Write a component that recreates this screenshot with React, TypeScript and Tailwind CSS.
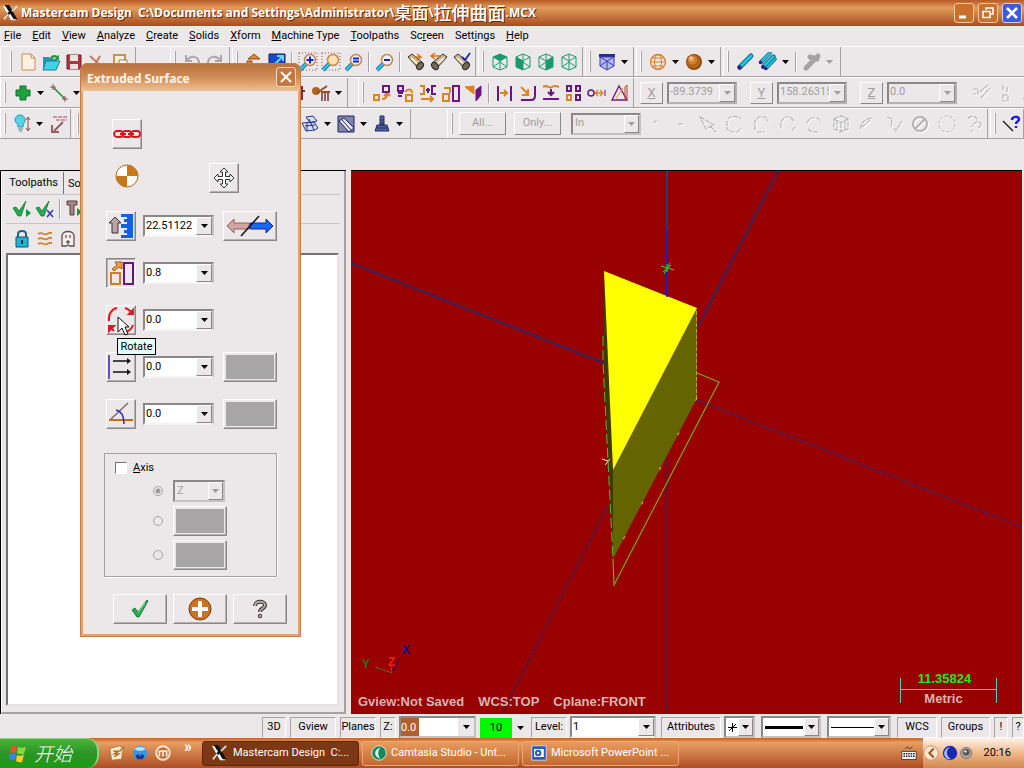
import React from "react";
import clsx from "clsx";

type Box = { children?: React.ReactNode; className?: string };

const menus: [string, string, string][] = [
  ["", "F", "ile"],
  ["", "E", "dit"],
  ["", "V", "iew"],
  ["", "A", "nalyze"],
  ["", "C", "reate"],
  ["", "S", "olids"],
  ["", "X", "form"],
  ["", "M", "achine Type"],
  ["", "T", "oolpaths"],
  ["Sc", "r", "een"],
  ["Sett", "i", "ngs"],
  ["", "H", "elp"],
];

/* ---------- small building blocks ---------- */

function Icon({ children, className }: Box) {
  return (
    <svg viewBox="0 0 20 20" className={clsx("shrink-0", className || "h-5 w-5")} fill="none" aria-hidden="true">
      {children}
    </svg>
  );
}

function Tool({ label, children }: { label: string; children: React.ReactNode }) {
  return (
    <button aria-label={label} className="flex w-[23px] shrink-0 items-center justify-center">
      {children}
    </button>
  );
}

function Arrow({ dim }: { dim?: boolean }) {
  return (
    <svg viewBox="0 0 7 4" className="h-1 w-[7px] shrink-0" aria-hidden="true">
      <path d="M0 0h7L3.5 4z" fill={dim ? "#a09d9e" : "#000"} />
    </svg>
  );
}

function Drop({ dim }: { dim?: boolean }) {
  return (
    <button aria-label="More" className="flex w-[13px] shrink-0 items-center justify-center">
      <Arrow dim={dim} />
    </button>
  );
}

function Sep() {
  return <span className="mx-[3px] h-5 w-0.5 shrink-0 self-center border-r border-l border-r-white border-l-[#a5a2a3]" />;
}

function Band({ children, className }: Box) {
  return (
    <div className={clsx("flex h-full items-stretch border-r border-l border-r-[#a5a2a3] border-l-white", className)}>
      <span className="my-1 mr-1 ml-[3px] w-0.5 shrink-0 border-r border-l border-r-[#a5a2a3] border-l-white" />
      {children}
    </div>
  );
}

function Combo({ label, value, dim, className }: { label: string; value: string; dim?: boolean; className?: string }) {
  return (
    <span className={clsx("flex h-[22px] shrink-0 border-2 border-t-[#8b8788] border-l-[#8b8788]", dim ? "border-r-[#b5b1b3] border-b-[#b5b1b3] bg-[#ece8ea]" : "border-r-[#c5c1c3] border-b-[#f5f3f4] bg-white", className)}>
      <input aria-label={label} defaultValue={value} className={clsx("min-w-0 flex-1 pl-px outline-none", dim && "text-[#a09d9e]")} />
      <button aria-label={label + " list"} className="flex w-4 items-center justify-center border border-t-white border-r-[#8b8788] border-b-[#8b8788] border-l-white bg-[#ece8ea]">
        <Arrow dim={dim} />
      </button>
    </span>
  );
}

function Pick({ label, value, dim, className, children }: { label: string; value: string; dim?: boolean; className?: string; children?: React.ReactNode }) {
  return (
    <span className={clsx("relative flex h-[22px] shrink-0 items-center border-2 border-t-[#8b8788] border-r-[#c5c1c3] border-b-[#c5c1c3] border-l-[#8b8788]", dim ? "bg-[#ece8ea]" : "bg-white", className)}>
      <select aria-label={label} disabled={dim} className={clsx("h-full w-full appearance-none pl-0.5 outline-none", dim && "text-[#a09d9e]")}>
        <option>{value}</option>
      </select>
      {children}
      <span className="pointer-events-none absolute inset-y-0 right-0 flex w-[15px] items-center justify-center border border-t-white border-r-[#8b8788] border-b-[#8b8788] border-l-white bg-[#ece8ea]">
        <Arrow dim={dim} />
      </span>
    </span>
  );
}

function Raised({ label, children, className }: { label: string; children?: React.ReactNode; className?: string }) {
  return (
    <button
      aria-label={label}
      className={clsx("flex h-[30px] shrink-0 items-center justify-center border", className || "w-[54px]", label !== "Scale" && "border-t-white border-r-[#8b8788] border-b-[#8b8788] border-l-white shadow-[inset_-1px_-1px_0_#b5b1b3]")}
    >
      {children}
    </button>
  );
}

function Swatch({ label }: { label: string }) {
  return (
    <Raised label={label} className="w-[54px] p-0.5">
      <span className="h-full w-full bg-[#a8a5a6]" />
    </Raised>
  );
}

/* ---------- icons ---------- */

const Logo = () => (
  <Icon className="h-[18px] w-[18px]">
    <path d="M1 2l6 1 9 15-6 0z" fill="#fff" />
    <path d="M3 1l5 0 9 16h-4z" fill="#111" />
    <path d="M18 1l-8 8-1 2-8 7 5-8z" fill="#111" />
    <path d="M17 2l-6 6M7 11l-5 6" stroke="#dcdcdc" strokeWidth="2" />
  </Icon>
);

const Magnifier = ({ kind }: { kind: string }) => (
  <Icon>
    {(kind === "plus" || kind === "box") && <path d="M1 1h18v17H1z" stroke="#9b4a44" strokeDasharray="1 2" />}
    <path d="M8 12l-6 6" stroke="#2277aa" strokeWidth="4" />
    <path d="M8 12l-6 6" stroke="#35c8ee" strokeWidth="2" />
    <circle cx="12" cy="8" r="5.5" fill={kind === "box" ? "#fbe3b8" : "#f3f0ff"} stroke="#c08a48" strokeWidth="1.5" />
    {kind === "plus" && <path d="M12 4.500v7M8.500 8h7" stroke="#1620d0" strokeWidth="2" />}
    {kind === "half" && <path d="M9 6.500h6M9 9.500h6" stroke="#1620d0" strokeWidth="2" />}
    {kind === "minus" && <path d="M9 8h6" stroke="#1620d0" strokeWidth="2" />}
  </Icon>
);

const Can = ({ kind }: { kind: number }) => (
  <Icon>
    <g transform={kind === 1 ? "matrix(-1 0 0 1 20 0)" : undefined}>
      <path d="M2 5l4-3 11 9-4 6z" fill="#c9b892" stroke="#3b3028" />
      <path d="M5 6l9 8" stroke="#f5ecd8" strokeWidth="2" />
      <ellipse cx="14" cy="14" rx="3" ry="4" transform="rotate(40 14 14)" fill="#74695c" stroke="#2b241e" />
    </g>
    {kind === 0 && <path d="M8 5h6M11 2l4 3-4 3" stroke="#d2761e" strokeWidth="1.500" />}
    {kind === 1 && <path d="M11 4H3M6 1L2 4l4 3" stroke="#d2761e" strokeWidth="1.500" />}
    {kind === 2 && <path d="M10 5l3 3 5-7" stroke="#1c24c8" strokeWidth="1.800" />}
  </Icon>
);

const Cube = ({ face, color = "#1a9a6c" }: { face?: string; color?: string }) => (
  <Icon>
    {face === "top" && <path d="M3 5l7-3 7 3-7 4z" fill={color} />}
    {face === "left" && <path d="M3 5l7 4v9l-7-3z" fill={color} />}
    {face === "right" && <path d="M17 5l-7 4v9l7-3z" fill={color} />}
    <path d="M3 5l7-3 7 3v10l-7 3-7-3zM3 5l7 4 7-4M10 9v9M10 2v7M3 15l7-5 7 5" stroke={color} />
  </Icon>
);

const Globe = () => (
  <Icon>
    <circle cx="10" cy="10" r="7.500" stroke="#d5802e" strokeWidth="1.300" />
    <ellipse cx="10" cy="10" rx="3.500" ry="7.500" stroke="#d5802e" />
    <path d="M2 10h16M4 6h12M4 14h12" stroke="#d5802e" />
  </Icon>
);

const Ball = () => (
  <Icon>
    <circle cx="10" cy="10" r="8" fill="#8e4a10" />
    <circle cx="9.500" cy="9.500" r="6.800" fill="#b4641a" />
    <circle cx="8.500" cy="8" r="4.500" fill="#cb8034" />
    <circle cx="7.500" cy="7" r="2.800" fill="#e0a05a" />
    <circle cx="7" cy="6" r="1.300" fill="#f8dcb4" />
  </Icon>
);

const Rod = ({ x = 0, y = 0, s = 1 }) => (
  <g transform={`translate(${x} ${y}) scale(${s})`}>
    <path d="M5 15L16 4" stroke="#176b86" strokeWidth="5" strokeLinecap="round" />
    <path d="M5 15L16 4" stroke="#22c4dd" strokeWidth="3" strokeLinecap="round" />
    <circle cx="4.500" cy="15.500" r="2.200" fill="#3a1c86" />
  </g>
);

const Sketch = ({ d }: { d: string }) => (
  <Icon className="h-5 w-5 drop-shadow-[1px_1px_0_#fff]">
    <path d={d} stroke="#b8b4b6" strokeWidth="1.200" strokeDasharray="5 1" />
  </Icon>
);

const Duo = ({ a, b, fill }: { a: string; b: string; fill?: boolean }) => (
  <Icon>
    <path d={a} stroke="#d98524" strokeWidth={fill ? 1 : 2} fill={fill ? "#d98524" : "none"} />
    <path d={b} stroke="#6d1484" strokeWidth={fill ? 1 : 2} fill={fill ? "#6d1484" : "none"} />
  </Icon>
);

const Check = ({ className }: { className?: string }) => (
  <Icon className={className}>
    <path d="M2 11l3-2 3 4L17 1l1 1-9 16H7z" fill="#24ad4e" stroke="#116a2c" strokeWidth=".8" />
    <path d="M8 14l7-10" stroke="#7fe39a" />
  </Icon>
);

/* ---------- window parts ---------- */

function TitleBar() {
  return (
    <header className="flex h-[26px] shrink-0 items-center bg-linear-to-b from-[#b65a24] via-[#e39c5c] via-30% to-[#a84c1c] pr-0.5 pl-0.5 font-['Open_Sans','Noto_Sans_CJK_SC',sans-serif] text-white">
      <Logo />
      <h1 className="ml-px flex flex-1 items-center text-[12px] font-bold whitespace-pre [text-shadow:1px_1px_0_#6b2a0c]">
        {"Mastercam Design  C:\\Documents and Settings\\Administrator\\"}
        <span className="text-[17px] font-medium">桌面</span>\<span className="text-[18px] font-medium">拉伸曲面</span>.MCX
      </h1>
      <div className="flex gap-1">
        <button aria-label="Minimize" className="h-5 w-5 rounded-[3px] border border-[#f0c8a0] bg-[#c8702e]">
          <svg viewBox="0 0 18 18"><path d="M4 13h7" stroke="#fff" strokeWidth="3" /></svg>
        </button>
        <button aria-label="Restore" className="h-5 w-5 rounded-[3px] border border-[#f0c8a0] bg-[#c8702e]">
          <svg viewBox="0 0 18 18" fill="none" stroke="#fff"><path d="M7 6V4h7v6h-2" strokeWidth="1.500" /><path d="M4 7.500h7v6H4z" strokeWidth="1.500" /></svg>
        </button>
        <button aria-label="Close" className="h-5 w-5 rounded-[3px] border border-[#c8d0ff] bg-[#3c5cdc]">
          <svg viewBox="0 0 18 18"><path d="M4 4l10 10M14 4L4 14" stroke="#fff" strokeWidth="2.500" /></svg>
        </button>
      </div>
    </header>
  );
}

function MenuBar() {
  return (
    <nav className="flex h-5 shrink-0 items-center gap-[11px] pl-1">
      {menus.map(([before, key, after]) => (
        <button key={key + after} className="whitespace-nowrap">
          {before}
          <u>{key}</u>
          {after}
        </button>
      ))}
    </nav>
  );
}

function Row({ children }: Box) {
  return <div className="flex h-[31px] shrink-0 gap-0.5 overflow-hidden border-t border-b border-t-white border-b-[#a5a2a3]">{children}</div>;
}

function ViewToolbar() {
  return (
    <Row>
      <Band className="w-[136px] shrink-0 pl-1.5">
        <Tool label="New"><Icon><path d="M4 2h9l4 4v12H4z" fill="#fff1e2" stroke="#c98a58" /><path d="M13 2v4h4" stroke="#c98a58" /></Icon></Tool>
        <Tool label="Open"><Icon><path d="M2 5h6l2 2h6v10H2z" fill="#1c9cae" /><path d="M5 9h14l-4 9H2z" fill="#43d3e8" stroke="#168296" /><path d="M9 6c2-4 6-3 7-2l2-1v5h-5l2-2c-2-1-3 0-4 2z" fill="#1fa048" /></Icon></Tool>
        <Tool label="Save"><Icon><path d="M3 3h14v14H3z" fill="#b03540" stroke="#6e1c26" /><path d="M6 3h8v6H6zM6 12h8v5H6z" fill="#f5dede" /></Icon></Tool>
        <Tool label="Cut"><Icon><path d="M3 4l12 11M6 16L13 4" stroke="#c77c5e" strokeWidth="2" /></Icon></Tool>
        <Tool label="Paste"><Icon><path d="M4 3h11v14H4z" stroke="#c9924e" strokeWidth="2" fill="#fbeeda" /><path d="M9 8h8v9H9z" fill="#fff" stroke="#9b7a50" /></Icon></Tool>
      </Band>
      <div className="w-[30px] shrink-0" />
      <Band className="w-[60px] shrink-0">
        <Tool label="Undo"><Icon><path d="M4 3v6h6M5 8c4-5 11-4 12 2s-5 8-8 7" stroke="#aaa6a8" strokeWidth="2" /></Icon></Tool>
        <Tool label="Redo"><Icon><path d="M16 3v6h-6M15 8C11 3 4 4 3 10s5 8 8 7" stroke="#aaa6a8" strokeWidth="2" /></Icon></Tool>
      </Band>
      <Band className="w-[244px] shrink-0">
        <Tool label="Fit"><Icon><path d="M10 2l6 5H4zM3 9h5v8H3z" fill="#e08a2c" stroke="#8a4a10" /></Icon></Tool>
        <Tool label="Repaint"><Icon><path d="M2 2h16v14H2z" fill="#1c44d0" stroke="#10206a" /><path d="M8 12l7-7M10 4h6v5" stroke="#6fd4f4" strokeWidth="2" /></Icon></Tool>
        <Sep />
        <Tool label="Zoom window"><Magnifier kind="plus" /></Tool>
        <Tool label="Zoom target"><Magnifier kind="box" /></Tool>
        <Tool label="Unzoom previous"><Magnifier kind="half" /></Tool>
        <Sep />
        <Tool label="Unzoom"><Magnifier kind="minus" /></Tool>
        <Sep />
        <Tool label="Dynamic rotate"><Can kind={0} /></Tool>
        <Tool label="Previous view"><Can kind={1} /></Tool>
        <Tool label="Named views"><Can kind={2} /></Tool>
      </Band>
      <Band className="w-[105px] shrink-0">
        <Tool label="Top view"><Cube face="top" /></Tool>
        <Tool label="Front view"><Cube face="left" /></Tool>
        <Tool label="Side view"><Cube face="right" /></Tool>
        <Tool label="Isometric view"><Cube /></Tool>
      </Band>
      <Band className="w-[49px] shrink-0">
        <Tool label="Planes"><Icon><path d="M2 2h16v3H2z" fill="#2a2c78" /><path d="M3 5h14v9l-7 4-7-4z" fill="#b4b8f4" stroke="#3a3cb4" /><path d="M10 9v9M3 5l7 4 7-4M3 14l7-5 7 5" stroke="#3a3cb4" /></Icon></Tool>
        <Drop />
      </Band>
      <Band className="w-[85px] shrink-0">
        <Tool label="Wireframe"><Globe /></Tool>
        <Drop />
        <Tool label="Shaded"><Ball /></Tool>
        <Drop />
      </Band>
      <Band className="w-[118px] shrink-0">
        <Tool label="Surface"><Icon><Rod /></Icon></Tool>
        <Tool label="Surfaces"><Icon><Rod x={-1} y={-2} s={0.8} /><Rod x={4} y={4} s={0.8} /><Rod x={1} y={1} s={0.9} /></Icon></Tool>
        <Drop />
        <Sep />
        <Tool label="Blank"><Icon><path d="M4 16L16 4M8 5l7 2" stroke="#a5a2a3" strokeWidth="5" strokeLinecap="round" /></Icon></Tool>
        <Drop dim />
      </Band>
    </Row>
  );
}

function Coord({ axis, value }: { axis: string; value: string }) {
  return (
    <>
      <button className="mr-1 h-[22px] w-[23px] shrink-0 self-center border border-t-white border-r-[#8b8788] border-b-[#8b8788] border-l-white text-[13px] text-[#a09d9e] underline">{axis}</button>
      <Combo label={axis + " coordinate"} value={value} dim className="mr-[13px] w-[70px] self-center" />
    </>
  );
}

function XformToolbar() {
  return (
    <Row>
      <Band className="w-[348px] shrink-0">
        <span className="w-px" />
        <Tool label="Point"><Icon><path d="M7 3h6v4h4v6h-4v4H7v-4H3V7h4z" fill="#1da23e" stroke="#0c7226" /></Icon></Tool>
        <Drop />
        <Tool label="Line"><Icon><path d="M4 4l12 12" stroke="#1a8a3a" strokeWidth="1.500" /><path d="M1 4h6M4 1v6M13 16h6M16 13v6" stroke="#8a5350" /></Icon></Tool>
        <Drop />
        <span className="flex-1" />
        <Tool label="Mill"><Icon><path d="M10 3v14M14 3v14M9 8h8" stroke="#7a3040" strokeWidth="2" /></Icon></Tool>
        <Tool label="Brush"><Icon><circle cx="5" cy="8" r="4" fill="#b06424" /><path d="M6 10l10-7M10 9h9" stroke="#9b4c24" strokeWidth="2" /><path d="M11 10v8M14 10v8M17 10v8" stroke="#7a3040" strokeWidth="1.500" /></Icon></Tool>
        <Drop />
        <span className="w-0.5" />
      </Band>
      <div className="w-[6px] shrink-0" />
      <Band className="w-[276px] shrink-0">
        <span className="w-0.5" />
        <Tool label="Dynamic"><Duo a="M2 12h5v5H2zM10 16c4 0 5-2 5-5M12 13l3-3 3 3" b="M11 3h6v6h-6z" /></Tool>
        <Tool label="Translate 3D"><Duo a="M11 12h6v6h-6zM10 9c3-4 7-3 7 1" b="M3 3h5v5H3zM3 10h5M3 13h4" /></Tool>
        <Tool label="Mirror"><Duo a="M2 3h4v8H2M3 16h12M12 13l3 3-3 3" b="M18 3h-4v8h4M8 7h4M10 5v5" /></Tool>
        <Tool label="Scale view"><Duo a="M2 11h6v7H2zM3 5h6v5" b="M12 3h6v15h-6z" /></Tool>
        <Tool label="Rotate view"><Duo fill a="M1 4l9-1v8L6 8z" b="M12 7l5-4v9l-5 6z" /></Tool>
        <Sep />
        <Tool label="Offset"><Duo a="M5 10h7M9 7l3 3-3 3" b="M3 3v15M16 3v15" /></Tool>
        <Tool label="Offset contour"><Duo a="M3 4l7 7M10 6v6H4" b="M17 3v10c0 3-2 4-4 4H3" /></Tool>
        <Tool label="Project"><Duo a="M2 4c4-3 6 2 9 0s4-1 7 0" b="M10 6v6M7 9l3 3 3-3M2 16h16" /></Tool>
        <Tool label="Array"><Duo a="M3 12h4v5H3z" b="M12 3h4v5h-4zM12 12h4v5h-4zM3 3h4v5H3z" /></Tool>
        <Tool label="Stretch"><Icon><circle cx="4" cy="10" r="3" stroke="#6d1484" strokeWidth="1.500" /><path d="M8 10h7M11 7l-3 3 3 3M13 7l3 3-3 3" stroke="#d98524" strokeWidth="1.300" /><path d="M18 7v6" stroke="#6d1484" /></Icon></Tool>
        <Tool label="Drag"><Icon><path d="M2 17h15L9 3z" stroke="#6d1484" strokeWidth="1.300" /><path d="M15 17V4l2-2v15z" stroke="#c83c30" /><path d="M5 17L13 5" stroke="#e0962c" /></Icon></Tool>
      </Band>
      <div className="flex min-w-0 flex-1 overflow-hidden pl-1">
        <Coord axis="X" value="-89.3739" />
        <Coord axis="Y" value="158.26315" />
        <Coord axis="Z" value="0.0" />
        <Tool label="Fast point"><Sketch d="M1 6h5v5H1M9 15L18 5M8 9L16 2" /></Tool>
        <Tool label="Relative"><Sketch d="M8 2v6M12 4v5M8 12h5v6H8z" /></Tool>
        <Tool label="AutoCursor"><Sketch d="M5 16L15 6" /></Tool>
      </div>
    </Row>
  );
}

const sketches = [
  ["Point filter", "M9 8h3M12 6v2"],
  ["Line filter", "M7 10h6"],
  ["Polygon", "M2 3l14 8-8 4zM12 12l6 6"],
  ["Window", "M4 5c3-4 9-3 13 0M3 7v8l5 3h6l3-4"],
  ["Chain", "M4 16V7l4-4h6l3 4M6 18h8"],
  ["Area", "M4 14V8l4-5h5l4 4M15 17l3-4"],
  ["Single", "M3 9l3-5h8l3 4M4 15l4 3h7"],
  ["Solid", "M3 5l7-3 7 3v10l-7 3-7-3zM3 5l7 4 7-4M10 9v9M6 6v10M14 6v10"],
  ["Edge", "M3 15c1-6 5-10 12-11M5 13l8-7"],
  ["Face", "M3 3l5 2-1 8M10 14l2 3 6-10"],
] as const;

function SelectToolbar() {
  return (
    <Row>
      <Band className="w-[71px] shrink-0">
        <Tool label="Light"><Icon><path d="M3 6a5 5 0 0110 0c0 3-2 3-2 7H6c0-4-3-4-3-7z" fill="#54d4e4" stroke="#2a98b0" /><path d="M6 15h5M7 17h3" stroke="#4c8890" /><path d="M16 4v12M14 6l2-3 2 3M14 14l2 3 2-3" stroke="#8a4a4c" /></Icon></Tool>
        <Drop />
        <Tool label="Section"><Icon><path d="M15 8l-9 9M4 11v7h7" stroke="#9b5c60" strokeWidth="2" /><path d="M5 3h14M8 6h11" stroke="#a04a50" strokeDasharray="4 1" /></Icon></Tool>
      </Band>
      <Band className="w-[338px] shrink-0">
        <span className="flex-1" />
        <Tool label="Sheet"><Icon><path d="M6 3l7-1 4 5-7 2zM2 9l12-1 4 6-3 2-9 1z" fill="#d6dcf8" stroke="#283488" /><path d="M9 5l5 11M5 12l10-1M7 9v8" stroke="#283488" /></Icon></Tool>
        <Drop />
        <Tool label="Surface ops"><Icon><path d="M2 2h16v16H2z" fill="#8084ac" stroke="#20245c" /><path d="M3 7l5-3 10 10-5 4z" fill="#e6e8fa" stroke="#20245c" /><path d="M6 6l9 10" stroke="#20245c" /></Icon></Tool>
        <Drop />
        <Tool label="Tool holder"><Icon><path d="M8 2h4v9H8zM5 11h10l2 6H3z" fill="#5264a8" stroke="#222c5c" /><path d="M8 6h4M8 9h4M4 14h12" stroke="#222c5c" /></Icon></Tool>
        <Drop />
        <span className="w-1" />
      </Band>
      <div className="w-[32px] shrink-0" />
      <Band className="min-w-0 flex-1">
        <button className="mr-2 ml-0.5 h-[23px] w-[47px] shrink-0 self-center border border-t-white border-r-[#8b8788] border-b-[#8b8788] border-l-white text-[#a09d9e]">All...</button>
        <button className="mr-2.5 h-[23px] w-[47px] shrink-0 self-center border border-t-white border-r-[#8b8788] border-b-[#8b8788] border-l-white text-[#a09d9e]">Only...</button>
        <Pick label="Window selection" value="In" dim className="w-[70px] self-center" />
        <div className="flex min-w-0 flex-1 justify-around overflow-hidden">
          {sketches.map(([label, d]) => (
            <Tool key={label} label={label}><Sketch d={d} /></Tool>
          ))}
          <Tool label="None"><Icon className="h-5 w-5 drop-shadow-[1px_1px_0_#fff]"><circle cx="10" cy="10" r="7" stroke="#b5b1b3" strokeWidth="2" /><path d="M5 15L15 5" stroke="#b5b1b3" strokeWidth="2" /></Icon></Tool>
          <Tool label="Verify"><Icon className="h-5 w-5 drop-shadow-[1px_1px_0_#fff]"><circle cx="10" cy="10" r="8" stroke="#b5b1b3" strokeDasharray="3 2" /></Icon></Tool>
          <Tool label="Selection help"><Sketch d="M4 5c2-4 9-3 9 1s-5 3-5 7M14 8c5 1 3 5 0 6M8 16v2" /></Tool>
        </div>
      </Band>
      <Band className="w-[34px] shrink-0">
        <Tool label="Help"><Icon><path d="M1 7l10 10" stroke="#111" strokeWidth="1.300" /><path d="M10 6c0-4 7-4 7-1 0 3-3 2-3 5M14 12v2" stroke="#1a1ed8" strokeWidth="2.500" /></Icon></Tool>
      </Band>
    </Row>
  );
}

function OperationsPanel() {
  return (
    <section className="flex w-[346px] shrink-0 flex-col border-t border-l border-black">
      <div className="flex flex-1 flex-col border-r-2 border-b-2 border-l border-r-[#a5a2a3] border-b-[#a5a2a3] border-l-white pr-1 pb-1.5 pl-1">
        <div className="flex h-[23px] items-end" role="tablist">
          <button role="tab" aria-selected className="h-[22px] w-[58px] border-r border-[#777374] pr-0.5">Toolpaths</button>
          <button role="tab" aria-selected={false} className="h-5 px-1">Solids</button>
        </div>
        <div className="flex h-[30px] items-center border-t border-b border-t-[#c9c5c7] border-b-[#c9c5c7] pl-1">
          <Tool label="Select all"><Icon><path d="M1 9l3-1 3 4 7-10-5 15H6z" fill="#24ad4e" stroke="#116a2c" strokeWidth=".7" /><path d="M14 10l5 4-5 4z" fill="#15923a" /></Icon></Tool>
          <Tool label="Select dirty"><Icon><path d="M1 9l3-1 3 4 7-10-5 15H6z" fill="#24ad4e" stroke="#116a2c" strokeWidth=".7" /><path d="M12 11l6 7M18 11l-6 7" stroke="#3432b4" strokeWidth="1.500" /></Icon></Tool>
          <Sep />
          <Tool label="Regenerate"><Icon><path d="M1 2h10v4H8v10H4V6H1z" fill="#a08a88" stroke="#5c3c3c" /><path d="M11 9l5 4-5 4z" fill="#15923a" /></Icon></Tool>
        </div>
        <div className="flex h-[29px] items-center pl-1">
          <Tool label="Lock"><Icon><path d="M6 9V5c0-4 8-4 8 0v4" stroke="#126a84" strokeWidth="2" /><path d="M4 8h12v10H4z" fill="#1cb4d0" stroke="#0c5870" /><path d="M10 11v4" stroke="#083848" strokeWidth="2" /></Icon></Tool>
          <Tool label="Toolpath display"><Icon><path d="M3 5c4-3 6 2 9 0s3-1 5-1M3 10c4-3 6 2 9 0s3-1 5-1M3 15c4-3 6 2 9 0s3-1 5-1" stroke="#d5802e" strokeWidth="1.800" /></Icon></Tool>
          <Tool label="Ghost"><Icon><path d="M4 17V7c0-6 12-6 12 0v10h-4l-2-1-2 1z" fill="#f4efef" stroke="#6a4c50" strokeWidth="1.300" /><path d="M8 6v3M12 6v3M9 12h2v2H9z" stroke="#333" /></Icon></Tool>
        </div>
        <div className="mr-px flex-1 border-2 border-t-[#777374] border-r-[#e6e2e4] border-b-[#e6e2e4] border-l-[#777374] bg-white" />
      </div>
    </section>
  );
}

function Viewport() {
  return (
    <main className="relative mr-0.5 ml-[5px] min-w-0 flex-1 overflow-hidden border-t border-black bg-[#990000] font-['Liberation_Sans',sans-serif] font-bold">
      <svg viewBox="351 171 671 543" preserveAspectRatio="xMidYMid slice" className="absolute inset-0 h-full w-full" fill="none">
        <path d="M351 263L604 363M778 171L698 327" stroke="#35255e" strokeWidth="2" />
        <path d="M697 400L1022 527" stroke="#541c48" strokeWidth="1.500" />
        <path d="M608 505L502 714M667 456V714" stroke="#541846" strokeWidth="1.500" />
        <path d="M667 171V230" stroke="#243c78" strokeWidth="2" />
        <path d="M667 230V298" stroke="#1a1ac0" strokeWidth="2" />
        <path d="M604 271L613 470V559L604 370z" fill="#3c3c00" />
        <path d="M697 308V398L613 559V470z" fill="#646400" />
        <path d="M604 271L697 308L613 470z" fill="#ffff00" />
        <path d="M667 293v4" stroke="#1a1ac0" strokeWidth="1.500" />
        <path d="M696.500 311V398" stroke="#c8a018" strokeDasharray="4 2" />
        <path d="M697 373L719 382L614 585L613 559" stroke="#78a818" strokeWidth="1.200" />
        <path d="M603 336V362L613 559" stroke="#4cc02c" strokeDasharray="10 4" />
        <path d="M697 398L613 559" stroke="#e8e000" strokeDasharray="3 36" />
        <path d="M661 266l13 4M664 274l6-11M663 272l8-7M667 264v8" stroke="#30d030" />
        <path d="M602 459l6 2M605 465l5-6" stroke="#f0f0c0" />
        <path d="M392 673L375 667" stroke="#4c7010" />
        <path d="M392 673L400 658" stroke="#201060" />
        <path d="M392 673L391 666" stroke="#f02010" />
        <g className="text-[12px]">
          <text x="362" y="668" fill="#18780c">Y</text>
          <text x="388" y="666" fill="#f02010">Z</text>
          <text x="402" y="654" fill="#101090">X</text>
        </g>
      </svg>
      <p className="absolute bottom-[3px] left-[7px] flex gap-[14px] text-[13px] text-[#d8b4b0]">
        <span>Gview:Not Saved</span>
        <span>WCS:TOP</span>
        <span>Cplane:FRONT</span>
      </p>
      <div className="absolute right-[25px] bottom-1.5 w-[97px] text-center text-[13px] leading-[18px]">
        <p className="pr-2 text-[#20e810]">11.35824</p>
        <svg viewBox="0 0 97 25" className="absolute top-2 left-0 h-[25px] w-[97px]"><path d="M.5 0v25M96.500 0v25M0 11.500h97" stroke="#58c8c8" /></svg>
        <p className="mt-0.5 pr-2.5 text-[#d8b4b0]">Metric</p>
      </div>
    </main>
  );
}

function Cell({ children, className }: Box) {
  return <button className={clsx("mx-px h-[21px] shrink-0 border border-t-[#a5a2a3] border-r-white border-b-white border-l-[#a5a2a3] text-center whitespace-nowrap", className)}>{children}</button>;
}

function StatusBar() {
  return (
    <div className="flex h-6 shrink-0 items-end justify-end gap-0.5 overflow-hidden">
      <Cell className="w-6">3D</Cell>
      <Cell className="w-[46px]">Gview</Cell>
      <Cell className="w-9">Planes</Cell>
      <Cell className="w-4">Z:</Cell>
      <span className="flex h-[22px] w-[77px] shrink-0 border-2 border-t-[#8b8788] border-r-[#c5c1c3] border-b-[#c5c1c3] border-l-[#8b8788] bg-white">
        <input aria-label="Z depth" defaultValue="0.0" className="h-full w-[18px] bg-[#b0602e] text-white outline-none" />
        <span className="flex-1" />
        <button aria-label="Z depth list" className="flex w-4 items-center justify-center bg-[#ece8ea]"><Arrow /></button>
      </span>
      <button className="ml-0.5 h-5 w-8 shrink-0 bg-[#00f800]">10</button>
      <button aria-label="Colour list" className="flex h-5 w-[13px] shrink-0 items-center justify-center"><Arrow /></button>
      <Cell className="ml-0.5 w-9">Level:</Cell>
      <Combo label="Level" value="1" className="w-[86px]" />
      <Cell className="ml-[3px] w-[60px]">Attributes</Cell>
      <Pick label="Point style" value="" className="w-[31px]">
        <svg viewBox="0 0 9 9" className="absolute left-0.5 h-[9px] w-[9px]"><path d="M0 4.500h9M4.500 0v9M1 8l7-7" stroke="#000" /></svg>
      </Pick>
      <Pick label="Line width" value="" className="ml-1 w-[60px]"><span className="absolute left-0.5 w-[38px] border-t-[3px] border-black" /></Pick>
      <Pick label="Line style" value="" className="ml-1 w-[64px]"><span className="absolute left-0.5 w-[43px] border-t border-black" /></Pick>
      <Cell className="ml-1 w-10">WCS</Cell>
      <Cell className="w-[49px]">Groups</Cell>
      <Cell className="w-[14px]">!</Cell>
      <Cell className="mr-0 w-3">?</Cell>
    </div>
  );
}

function Task({ active, children }: { active?: boolean; children: React.ReactNode }) {
  return (
    <button
      className={clsx(
        "mr-[3px] flex h-[25px] w-[157px] shrink-0 items-center gap-1 rounded-[3px] border pl-2 whitespace-nowrap",
        active ? "border-[#5c260c] bg-[#7c3814]" : "border-[#e8a878] bg-linear-to-b from-[#e89c60] to-[#c4682e]",
      )}
    >
      {children}
    </button>
  );
}

function TaskBar() {
  return (
    <footer className="flex h-[30px] shrink-0 items-center bg-linear-to-b from-[#c0622c] via-[#e89e62] via-15% to-[#ae4e22] text-white">
      <button className="mr-1.5 flex h-full w-[99px] items-center gap-1.5 rounded-r-xl border-t border-r-2 border-[#8fd07c] bg-linear-to-b from-[#48b43c] via-[#2c9424] to-[#189c10] pl-2 font-['Noto_Sans_CJK_SC',sans-serif] text-[19px] font-light italic">
        <Icon>
          <path d="M3 3c2-2 4-1 6 0L8 9C6 8 4 8 2 9z" fill="#e8502c" />
          <path d="M10 3c3 1 5 1 8 0l-2 7c-2 1-4 0-7-1z" fill="#84d840" />
          <path d="M2 10c2-1 4-1 6 0l-1 6c-2-1-4-1-6 1z" fill="#3c80f0" />
          <path d="M9 11c2 1 4 1 7 0l-2 7c-2 1-4 0-6-1z" fill="#f8cc28" />
        </Icon>
        开始
      </button>
      <Tool label="Mail"><Icon className="h-[18px] w-[18px]"><path d="M2 5l11-3 4 3-2 12-11 1z" fill="#f5ead0" stroke="#a8763c" /><path d="M6 8h6l-5 3h5l-5 3M13 8l5-5" stroke="#b06c1c" strokeWidth="1.500" /></Icon></Tool>
      <Tool label="Messenger"><Icon className="h-[18px] w-[18px]"><circle cx="10" cy="10" r="8" fill="#3c94e8" /><path d="M4 6c2-4 10-4 12 0-3 2-9 2-12 0z" fill="#b8e4fc" /><path d="M5 13l3-2 2 3 2-3 3 2-2 4H7z" fill="#15378c" /></Icon></Tool>
      <Tool label="Maxthon"><Icon className="h-[18px] w-[18px]"><circle cx="10" cy="10" r="7.500" fill="#c46c34" stroke="#fbe8d4" strokeWidth="2" /><path d="M6 14V8h8v6M10 8v6" stroke="#fbe8d4" strokeWidth="2" /></Icon></Tool>
      <button aria-label="More shortcuts" className="mb-3 ml-1 w-5 text-[16px] leading-4 font-bold">»</button>
      <span className="w-1" />
      <Task active><Logo />Mastercam Design&nbsp; C:...</Task>
      <Task>
        <Icon className="h-4 w-4"><circle cx="10" cy="10" r="9" fill="#16885c" stroke="#e0fff0" /><path d="M12 3c-9 2-9 12 0 14-4-4-4-10 0-14z" fill="#d8fff0" /></Icon>
        Camtasia Studio - Unt...
      </Task>
      <Task>
        <Icon className="h-4 w-4"><path d="M1 1h18v18H1z" fill="#2858c0" stroke="#dce8ff" /><path d="M4 5h12v10H4z" fill="#fff" /><circle cx="9" cy="10" r="4" fill="#2858c0" /><circle cx="9" cy="10" r="1.500" fill="#fff" /></Icon>
        Microsoft PowerPoint ...
      </Task>
      <span className="flex-1" />
      <Icon className="mr-1.5 h-4 w-4"><path d="M1 8h18v10H1z" fill="#fff" stroke="#222" /><path d="M3 11h14M3 14h14" stroke="#222" strokeWidth="2" strokeDasharray="2 1" /><path d="M5 5l3-3 3 3 3-3" stroke="#222" /></Icon>
      <div className="flex h-full w-[101px] shrink-0 items-center bg-linear-to-b from-[#fdf3ea] via-[#f0b888] to-[#d08850] pr-[13px] text-black">
        <Icon className="h-[18px] w-[18px]"><circle cx="9" cy="10" r="8" fill="#f8e4d0" stroke="#c8925c" /><path d="M12 5l-5 5 5 5" stroke="#96501c" strokeWidth="2" /></Icon>
        <Icon className="h-[18px] w-[18px]"><circle cx="10" cy="10" r="8" fill="#1828b4" /><path d="M11 3c-6 2-6 12 1 14C2 18 0 5 11 3z" fill="#a4bcf8" /></Icon>
        <Icon className="h-4 w-4"><circle cx="9" cy="10" r="7" fill="#a8a4a0" stroke="#6c6864" /><circle cx="9" cy="9" r="4" fill="#585450" /><circle cx="8" cy="8" r="1.500" fill="#eee" /></Icon>
        <time className="ml-auto">20:16</time>
      </div>
    </footer>
  );
}

/* ---------- extruded surface dialog ---------- */

function Param({ label, value, icon, extra, pressed }: { label: string; value: string; icon: React.ReactNode; extra?: React.ReactNode; pressed?: boolean }) {
  return (
    <div className="flex h-[30px] items-center">
      <Raised label={label} className={clsx("mr-[7px] w-[30px]", pressed && "border-t-[#8b8788] border-r-white border-b-white border-l-[#8b8788] shadow-[inset_1px_1px_0_#b5b1b3]")}>
        {icon}
      </Raised>
      <Combo label={label + " value"} value={value} className="mr-[9px] w-[71px]" />
      {extra}
    </div>
  );
}

function ExtrudedSurfaceDialog() {
  return (
    <div role="dialog" aria-label="Extruded Surface" className="absolute top-[63px] left-20 flex w-[221px] flex-col rounded-t-lg border-[3px] border-t-0 border-[#e4a470] bg-[#ece8ea] outline-1 -outline-offset-1 outline-[#c47c48]">
      <div className="-mx-0.5 flex h-7 items-center justify-between rounded-t-md bg-linear-to-b from-[#b8703c] via-[#d08c54] to-[#f0c090] pr-1 pl-1.5">
        <h2 className="pt-1 font-['Open_Sans',sans-serif] text-[12px] font-bold text-[#fdf5ee]">Extruded Surface</h2>
        <button aria-label="Close dialog" className="h-5 w-5 rounded-[3px] border border-[#f6d8bc] bg-[#c47844]">
          <svg viewBox="0 0 18 18"><path d="M4 4l10 10M14 4L4 14" stroke="#fff" strokeWidth="2" /></svg>
        </button>
      </div>

      <div className="flex flex-col pt-7 pb-2.5 pl-[23px]">
        <Raised label="Chain" className="ml-1.5 w-[30px]">
          <svg viewBox="0 0 28 10" className="h-2.5 w-7" fill="none" stroke="#d8141c" strokeWidth="1.800">
            <rect x="1" y="2" width="9" height="6" rx="3" /><rect x="9.500" y="2" width="9" height="6" rx="3" /><rect x="18" y="2" width="9" height="6" rx="3" />
            <path d="M7 5h6M15 5h6" />
          </svg>
        </Raised>
        <div className="mt-[14px] flex h-[30px] items-center">
          <button aria-label="Base point" className="mr-[70px] ml-[9px]">
            <svg viewBox="0 0 24 24" className="mb-1 h-6 w-6"><circle cx="12" cy="12" r="11" fill="#fff" stroke="#a86420" /><path d="M12 12V1a11 11 0 0111 11zM12 12v11A11 11 0 011 12z" fill="#c87818" /></svg>
          </button>
          <Raised label="Move" className="w-[30px]">
            <svg viewBox="0 0 22 22" className="h-[22px] w-[22px]" fill="#fff" stroke="#333"><path d="M11 1l4 4h-2.500v4.500H17V7l4 4-4 4v-2.500h-4.500V17H15l-4 4-4-4h2.500v-4.500H5V15l-4-4 4-4v2.500h4.500V5H7z" /></svg>
          </Raised>
        </div>
        <div className="mt-[18px] flex flex-col gap-[17px]">
          <Param
            label="Length"
            value="22.51122"
            icon={<svg viewBox="0 0 28 26" className="h-[26px] w-7"><path d="M8 4l6 6h-3v10H5V10H2z" fill="#b8a4a4" stroke="#3c3434" /><path d="M14 1h12v24H14v-3h6v-2h-3v-3h3v-2h-6v-4h6V9h-3V6h3V4h-6z" fill="#1460e4" /></svg>}
            extra={
              <Raised label="Flip">
                <svg viewBox="0 0 48 24" className="h-6 w-12"><path d="M1 12l7-7v4h15v6H8v4z" fill="#d4a4a0" stroke="#886464" /><path d="M47 12l-7-7v4H24v6h16v4z" fill="#1868f4" stroke="#1420a0" /><path d="M15 22L33 2" stroke="#111" strokeWidth="1.500" /></svg>
              </Raised>
            }
          />
          <Param
            pressed
            label="Scale"
            value="0.8"
            icon={<svg viewBox="0 0 28 26" className="h-[26px] w-7" fill="none"><path d="M4 13h9v11H4z" stroke="#cf7d24" strokeWidth="2" /><path d="M17 3h9v21h-9z" stroke="#6d1484" strokeWidth="2" /><path d="M5 9l5-4-2-3h7v7l-3-2-5 4z" fill="#e8a03c" stroke="#a85c14" /></svg>}
          />
          <div className="relative">
            <Param
              label="Rotate"
              value="0.0"
              icon={<svg viewBox="0 0 28 28" className="h-7 w-7" fill="none" stroke="#dc1c24" strokeWidth="2"><path d="M2 15C1 8 5 3 10 2M18 2c3 1 6 3 7 6M26 19c-1 3-4 6-7 7" /><path d="M22 8h4V4zM2 20h5l-5 5zM3 21l4 4" fill="#dc1c24" /></svg>}
            />
            <svg viewBox="0 0 13 21" className="absolute top-[11px] left-[11px] z-10 h-[21px] w-[13px]"><path d="M1 1v15l4-4 3 7 3-1-3-7h4z" fill="#fff" stroke="#111" /></svg>
            <span role="tooltip" className="absolute top-[33px] left-[11px] z-10 h-[17px] w-[39px] border border-black bg-[#e4fcf8] text-center leading-[15px]">Rotate</span>
          </div>
          <Param
            label="Offset"
            value="0.0"
            icon={<svg viewBox="0 0 28 28" className="h-7 w-7" fill="none"><path d="M2 2v24" stroke="#3420b4" strokeWidth="1.500" /><path d="M6 8h16M6 19h16" stroke="#111" strokeWidth="1.500" /><path d="M20 5l4 3-4 3zM20 16l4 3-4 3z" fill="#111" /></svg>}
            extra={<Swatch label="Offset direction" />}
          />
          <Param
            label="Taper"
            value="0.0"
            icon={<svg viewBox="0 0 28 28" className="h-7 w-7" fill="none"><path d="M3 20L21 3" stroke="#7c6c6c" strokeWidth="1.500" /><path d="M2 20h24" stroke="#c86c1c" strokeWidth="2" /><path d="M9 10c5 1 8 6 8 14" stroke="#2030c0" strokeWidth="1.500" /></svg>}
            extra={<Swatch label="Taper direction" />}
          />
        </div>

        <fieldset className="mt-6 -ml-0.5 h-[124px] w-[173px] border border-[#a5a2a3] pl-2.5 shadow-[1px_1px_0_#fff]">
          <label className="mt-1.5 flex h-4 items-center gap-1.5">
            <input type="checkbox" className="h-3 w-3 appearance-none border border-t-[#777374] border-r-white border-b-white border-l-[#777374] bg-white" />
            <span><u>A</u>xis</span>
          </label>
          <div className="flex flex-col gap-1 pt-1 pl-[38px]">
            <label className="flex h-[22px] items-center gap-2.5">
              <input type="radio" name="axis" aria-label="Axis name" disabled defaultChecked className="h-2.5 w-2.5 appearance-none rounded-full border border-[#a5a2a3] bg-[radial-gradient(#999_2px,transparent_3px)]" />
              <Pick label="Axis name" value="Z" dim className="h-5 w-[52px]" />
            </label>
            <label className="flex items-center gap-2.5">
              <input type="radio" name="axis" aria-label="Axis line" disabled className="h-2.5 w-2.5 appearance-none rounded-full border border-[#a5a2a3]" />
              <Swatch label="Pick line" />
            </label>
            <label className="flex items-center gap-2.5">
              <input type="radio" name="axis" aria-label="Axis points" disabled className="h-2.5 w-2.5 appearance-none rounded-full border border-[#a5a2a3]" />
              <Swatch label="Pick points" />
            </label>
          </div>
        </fieldset>

        <div className="mt-[17px] ml-[7px] flex gap-1.5">
          <Raised label="OK"><Check /></Raised>
          <Raised label="Apply">
            <svg viewBox="0 0 24 24" className="h-6 w-6"><circle cx="12" cy="12" r="11" fill="#cc7220" stroke="#7c3c0c" /><path d="M12 4v16M4 12h16" stroke="#fff" strokeWidth="4" /></svg>
          </Raised>
          <Raised label="Help">
            <Icon><path d="M5 7c0-6 10-5 10-1 0 4-5 3-5 7" stroke="#3c3434" strokeWidth="4" /><path d="M5 7c0-6 10-5 10-1 0 4-5 3-5 7" stroke="#b4a8a8" strokeWidth="2" /><circle cx="10" cy="17" r="1.800" fill="#b4a8a8" stroke="#3c3434" /></Icon>
          </Raised>
        </div>
      </div>
    </div>
  );
}

export default function App() {
  return (
    <div className="relative flex h-screen flex-col overflow-hidden bg-[#ece8ea] font-['Roboto','Noto_Sans_CJK_SC',sans-serif] text-[11px] text-black">
      <TitleBar />
      <MenuBar />
      <ViewToolbar />
      <XformToolbar />
      <SelectToolbar />
      <div className="h-[31px] shrink-0" />
      <div className="flex min-h-0 flex-1">
        <OperationsPanel />
        <Viewport />
      </div>
      <StatusBar />
      <TaskBar />
      <ExtrudedSurfaceDialog />
    </div>
  );
}
